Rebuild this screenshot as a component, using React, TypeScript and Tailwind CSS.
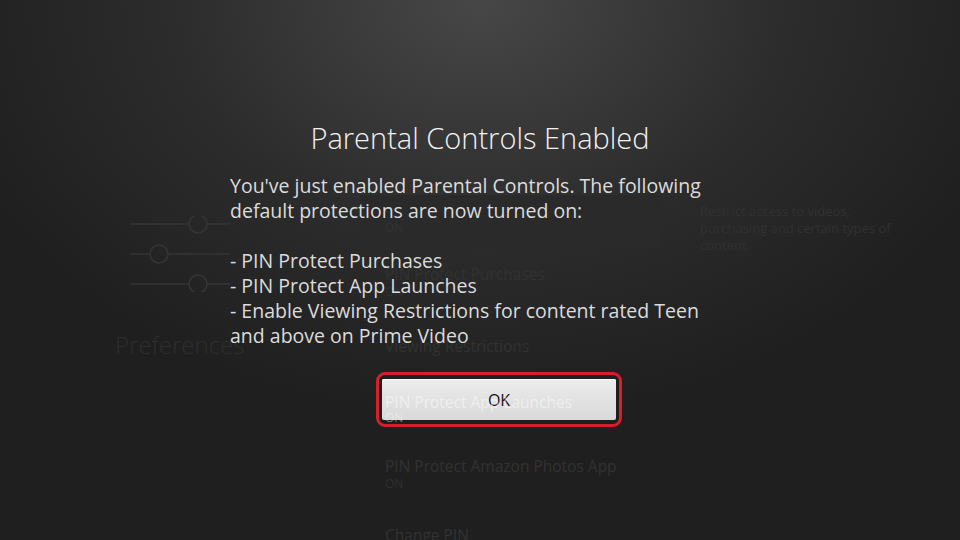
const font = { fontFamily: '"Open Sans", "Noto Sans", sans-serif' };

function SlidersIcon() {
  return (
    <svg width="100" height="76" viewBox="0 0 100 76" fill="none" stroke="#353535" strokeWidth="1.5">
      <line x1="0" y1="8" x2="59" y2="8" />
      <line x1="77" y1="8" x2="100" y2="8" />
      <circle cx="68" cy="8" r="9" />
      <line x1="0" y1="38" x2="20" y2="38" />
      <line x1="38" y1="38" x2="100" y2="38" />
      <circle cx="29" cy="38" r="9" />
      <line x1="0" y1="68" x2="59" y2="68" />
      <line x1="77" y1="68" x2="100" y2="68" />
      <circle cx="68" cy="68" r="9" />
    </svg>
  );
}

const rows = [
  { title: "PIN Protect Purchases", sub: "ON", gap: "mt-[16px]" },
  { title: "Viewing Restrictions", sub: "", gap: "mt-[36px]" },
  { title: "PIN Protect App Launches", sub: "ON", gap: "mt-[36px]" },
  { title: "PIN Protect Amazon Photos App", sub: "ON", gap: "mt-[28px]" },
  { title: "Change PIN", sub: "", gap: "mt-[33px]" },
];

function Background() {
  return (
    <div className="flex h-full pt-[195px]">
      <div className="w-[360px] pl-[115px] flex flex-col">
        <div className="pl-[15px] pt-[21px]">
          <SlidersIcon />
        </div>
        <div className="mt-[41px] text-[24px] font-light text-[#2e2e2e] leading-none">Preferences</div>
      </div>
      <div className="w-[300px] flex flex-col">
        <div className="shrink-0 h-[53px] bg-[#2a2a2a] px-[25px] pt-[25px]">
          <div className="text-[12px] leading-[16px] text-[#333]">ON</div>
        </div>
        {rows.map((r) => (
          <div key={r.title} className={`shrink-0 px-[25px] ${r.gap}`}>
            <div className="text-[15.5px] leading-[20px] text-[#323232] whitespace-nowrap">{r.title}</div>
            {r.sub && <div className="text-[12px] leading-[16px] text-[#2f2f2f]">{r.sub}</div>}
          </div>
        ))}
      </div>
      <div className="pl-[40px] pt-[8px] w-[240px] text-[13px] leading-[17px] text-[#313131]">
        Restrict access to videos, purchasing and certain types of content.
      </div>
    </div>
  );
}

export default function App() {
  return (
    <div
      style={font}
      className="relative w-[960px] h-[540px] overflow-hidden bg-[radial-gradient(ellipse_560px_420px_at_50%_0%,#474747_0%,#2c2c2c_55%,#1f1f1f_100%)]"
    >
      <Background />
      <div className="absolute inset-0 flex flex-col items-center pt-[119px]">
        <h1 className="text-[29px] font-light leading-[38px] text-[#f2f2f2]">Parental Controls Enabled</h1>
        <div className="mt-[16px] w-[500px] text-[19.5px] leading-[25px] text-[#dcdcdc]">
          <p>You've just enabled Parental Controls. The following default protections are now turned on:</p>
          <p className="mt-[25px]">- PIN Protect Purchases</p>
          <p>- PIN Protect App Launches</p>
          <p>- Enable Viewing Restrictions for content rated Teen and above on Prime Video</p>
        </div>
        <div className="relative mt-[24px] ml-[38px] rounded-[9px] border-[3px] border-[#d3202c] bg-[#1e1e1e] py-[4px] px-[3px]">
          <button className="w-[234px] h-[41px] rounded-[2px] bg-gradient-to-b from-[#ececec] to-[#d9d9d9] text-[16px] text-[#111] shadow-[inset_0_1px_0_#fff]">
            OK
          </button>
          <div className="pointer-events-none absolute left-[6px] top-[17px] text-[15.5px] leading-[20px] text-white/50 whitespace-nowrap">
            PIN Protect App Launches
          </div>
          <div className="pointer-events-none absolute left-[6px] top-[36px] text-[12px] leading-[14px] text-white/40">ON</div>
        </div>
      </div>
    </div>
  );
}
